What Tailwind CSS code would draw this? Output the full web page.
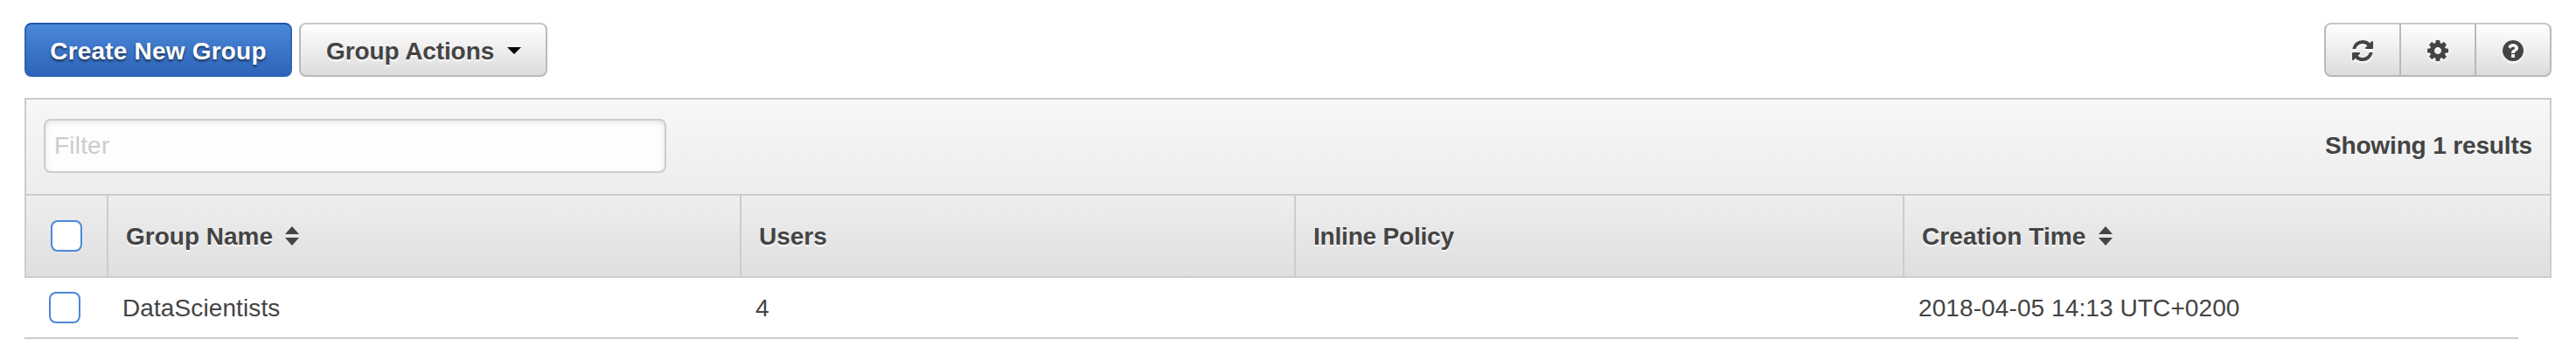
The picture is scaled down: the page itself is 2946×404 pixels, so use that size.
<!DOCTYPE html>
<html lang="en">
<head>
<meta charset="utf-8">
<title>Groups</title>
<script src="https://cdn.jsdelivr.net/npm/@tailwindcss/browser@4"></script>
</head>
<body class="h-[404px] w-[2946px] overflow-hidden bg-white pt-[26px] pl-7 font-['Liberation_Sans',Arial,sans-serif] text-[28px] leading-[32px] text-[#444]">
<div class="w-[2890px]">
  <!-- Toolbar -->
  <header class="flex h-[62px] justify-between">
    <div class="flex gap-2">
      <button class="flex w-[306px] items-center justify-center rounded-lg border-2 border-[#2e63b5] border-t-[#2055a8] bg-linear-to-b from-[#4a88da] to-[#2e64b8] pt-[3px] font-bold tracking-[0.2px] whitespace-nowrap text-white [text-shadow:0_2px_3px_rgba(0,0,0,0.6)]">Create New Group</button>
      <button class="flex w-[284px] items-center rounded-lg border-2 border-[#b9b9b9] border-t-[#c8c8c8] bg-linear-to-b from-white to-[#dcdcdc] pt-[3px] pl-[29px] font-bold tracking-[-0.1px] whitespace-nowrap [text-shadow:0_2px_2px_rgba(255,255,255,0.9)]">Group Actions
        <svg class="mb-px ml-[15px] h-2 w-4" viewBox="0 0 16 8"><path d="M0 0h16L8 8z" fill="#000"/></svg>
      </button>
    </div>
    <div class="flex w-[260px] divide-x-2 divide-[#b9b9b9] overflow-hidden rounded-lg border-2 border-[#b9b9b9] border-t-[#c8c8c8] bg-linear-to-b from-white to-[#dcdcdc]">
      <button class="flex w-[86px] items-center justify-center pt-px"><svg class="h-6 w-6 drop-shadow-[0_2px_1px_#fff]" viewBox="0 0 1536 1536" fill="#444"><path d="M1511 928q0 5-1 7-64 268-268 434.500t-478 166.500q-146 0-282.500-55t-243.500-157l-129 129q-19 19-45 19t-45-19-19-45v-448q0-26 19-45t45-19h448q26 0 45 19t19 45-19 45l-137 137q71 66 161 102t187 36q134 0 250-65t186-179q11-17 53-117 8-23 30-23h192q13 0 22.500 9.500t9.500 22.500zm25-800v448q0 26-19 45t-45 19h-448q-26 0-45-19t-19-45 19-45l138-138q-148-137-349-137-134 0-250 65t-186 179q-11 17-53 117-8 23-30 23h-199q-13 0-22.500-9.500t-9.500-22.500v-7q65-268 270-434.500t480-166.500q146 0 284 55.500t245 156.500l130-129q19-19 45-19t45 19 19 45z"/></svg></button>
      <button class="flex w-[86px] items-center justify-center pt-px"><svg class="h-6 w-6 drop-shadow-[0_2px_1px_#fff]" viewBox="128 128 1536 1536" fill="#444"><path d="M1152 896q0-106-75-181t-181-75-181 75-75 181 75 181 181 75 181-75 75-181zm512-109v222q0 12-8 23t-20 13l-185 28q-19 54-39 91 35 50 107 138 10 12 10 25t-9 23q-27 37-99 108t-94 71q-12 0-26-9l-138-108q-44 23-91 38-16 136-29 186-7 28-36 28h-222q-14 0-24.500-8.500t-11.500-21.500l-28-184q-49-16-90-37l-141 107q-10 9-25 9-14 0-25-11-126-114-165-168-7-10-7-23 0-12 8-23 15-21 51-66.500t54-70.500q-27-50-41-99l-183-27q-13-2-21-12.500t-8-23.500v-222q0-12 8-23t19-13l186-28q14-46 39-92-40-57-107-138-10-12-10-24 0-10 9-23 26-36 98.500-107.500t94.500-71.500q13 0 26 10l138 107q44-23 91-38 16-136 29-186 7-28 36-28h222q14 0 24.500 8.500t11.500 21.500l28 184q49 16 90 37l142-107q9-9 24-9 13 0 25 10 129 119 165 170 7 8 7 22 0 12-8 23-15 21-51 66.500t-54 70.500q26 50 41 98l183 28q13 2 21 12.500t8 23.500z"/></svg></button>
      <button class="flex w-[84px] items-center justify-center pt-px"><svg class="h-6 w-6 drop-shadow-[0_2px_1px_#fff]" viewBox="128 128 1536 1536" fill="#444"><path d="M1024 1376v-192q0-14-9-23t-23-9h-192q-14 0-23 9t-9 23v192q0 14 9 23t23 9h192q14 0 23-9t9-23zm256-672q0-88-55.500-163t-138.500-116-170-41q-243 0-371 213-15 24 8 42l132 100q7 6 19 6 16 0 25-12 53-68 86-92 34-24 86-24 48 0 85.500 26t37.500 59q0 38-20 61t-68 45q-63 28-115.500 86.500t-52.500 125.500v36q0 14 9 23t23 9h192q14 0 23-9t9-23q0-19 21.500-49.500t54.500-49.500q32-18 49-28.500t46-35 44.500-48 28-60.500 12.500-81zm384 192q0 209-103 385.500t-279.500 279.500-385.500 103-385.500-103-279.500-279.500-103-385.500 103-385.500 279.500-279.500 385.500-103 385.500 103 279.500 279.500 103 385.500z"/></svg></button>
    </div>
  </header>

  <!-- Filter bar and column headings -->
  <section class="mt-6 h-[206px] border-2 border-[#ccc]">
    <div class="flex h-[108px] items-center justify-between bg-linear-to-b from-[#f7f7f7] to-[#ededed] pr-5 pb-[2px] pl-5">
      <input type="text" placeholder="Filter" class="h-[62px] w-[712px] rounded-lg border-2 border-[#ccc] bg-[#fdfdfd] px-[10px] tracking-[0.2px] shadow-[inset_0_2px_6px_rgba(0,0,0,0.1)] placeholder:text-[#ccc]">
      <span class="font-bold tracking-[-0.15px]">Showing 1 results</span>
    </div>
    <div class="box-content flex h-[92px] items-stretch border-t-2 border-[#ccc] bg-linear-to-b from-[#eee] to-[#dfdfdf] font-bold [text-shadow:0_2px_1px_rgba(255,255,255,0.8)]">
      <div class="flex w-[94px] items-center border-r-2 border-[#ccc] pl-7"><span class="h-9 w-9 rounded-lg border-2 border-[#4a88da] bg-white"></span></div>
      <div class="flex w-[724px] items-center border-r-2 border-[#ccc] pt-[2px] pl-5">Group Name
        <svg class="mb-[2px] ml-[14px] h-[22px] w-4" viewBox="0 0 16 22" fill="#444"><path d="M0 9h16L8 0zM0 13h16l-8 9z"/></svg>
      </div>
      <div class="flex w-[634px] items-center border-r-2 border-[#ccc] pt-[2px] pl-5">Users</div>
      <div class="flex w-[696px] items-center border-r-2 border-[#ccc] pt-[2px] pl-5 tracking-[-0.2px]">Inline Policy</div>
      <div class="flex grow items-center pt-[2px] pl-5 tracking-[0.1px]">Creation Time
        <svg class="mb-[2px] ml-[14px] h-[22px] w-4" viewBox="0 0 16 22" fill="#444"><path d="M0 9h16L8 0zM0 13h16l-8 9z"/></svg>
      </div>
    </div>
  </section>

  <!-- Group row -->
  <div class="flex h-[70px] w-[2852px] items-center border-b-2 border-[#ccc] pt-px tracking-[0.1px]">
    <div class="flex w-[112px] pb-px pl-7"><span class="h-9 w-9 rounded-lg border-2 border-[#4a88da] bg-white"></span></div>
    <div class="w-[724px]">DataScientists</div>
    <div class="w-[1330px]">4</div>
    <div>2018-04-05 14:13 UTC+0200</div>
  </div>
</div>
</body>
</html>
